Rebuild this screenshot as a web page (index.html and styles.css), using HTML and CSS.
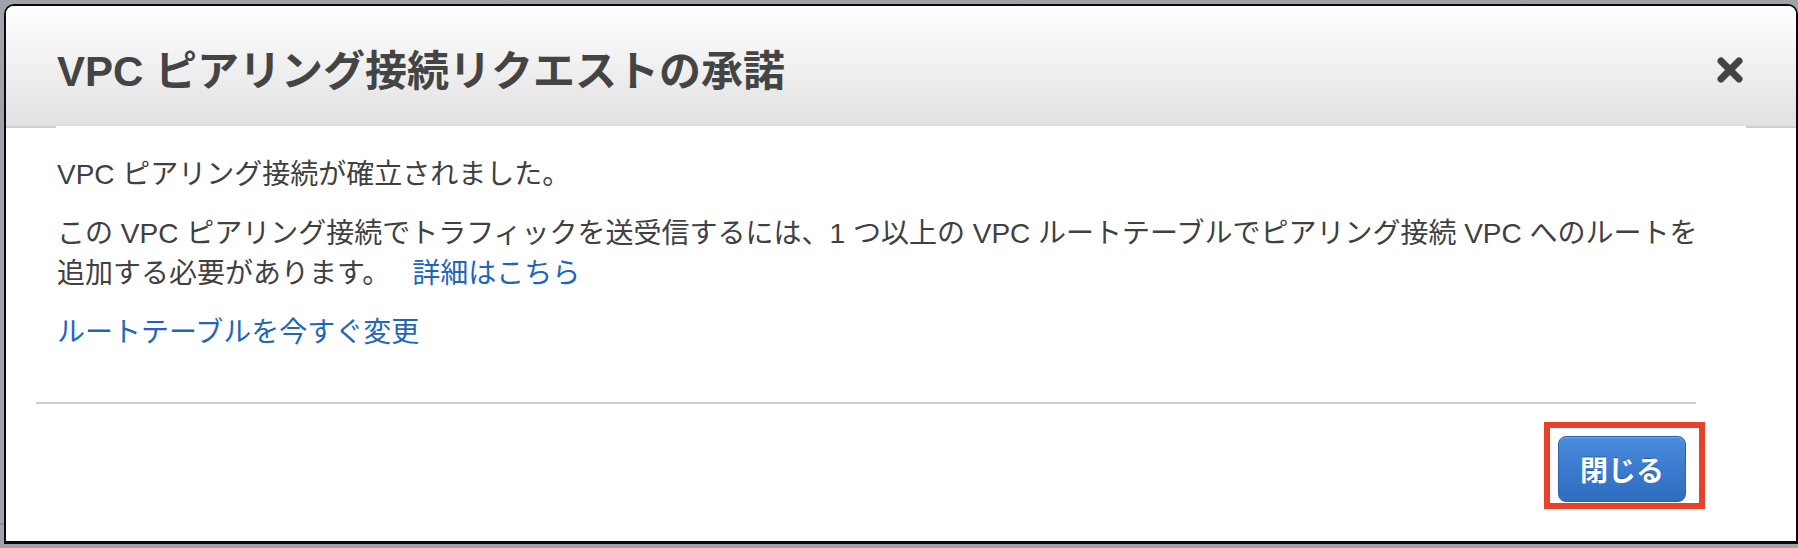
FILE: index.html
```html
<!DOCTYPE html>
<html lang="ja">
<head>
<meta charset="utf-8">
<title>VPC ピアリング接続リクエストの承諾</title>
<link rel="stylesheet" href="styles.css">
</head>
<body>
<div class="modal">
  <div class="modal-header">
    <h1 class="modal-title">VPC ピアリング接続リクエストの承諾</h1>
    <button class="close-btn" aria-label="閉じる">
      <svg width="26" height="26" viewBox="0 0 26 26"><path d="M4 4 L22 22 M22 4 L4 22" stroke="#444" stroke-width="7" stroke-linecap="round"/></svg>
    </button>
  </div>
  <div class="header-rule"></div>
  <div class="modal-body">
    <p>VPC ピアリング接続が確立されました。</p>
    <p>この VPC ピアリング接続でトラフィックを送受信するには、1 つ以上の VPC ルートテーブルでピアリング接続 VPC へのルートを追加する必要があります。<a class="link more" href="#">詳細はこちら</a></p>
    <p><a class="link" href="#">ルートテーブルを今すぐ変更</a></p>
  </div>
  <div class="separator"></div>
  <div class="modal-footer">
    <div class="highlight">
      <button class="primary-btn">閉じる</button>
    </div>
  </div>
</div>
</body>
</html>
```

FILE: styles.css
```css
html, body {
  margin: 0;
  padding: 0;
}
body {
  width: 1798px;
  height: 548px;
  overflow: hidden;
  background: linear-gradient(to bottom, #a0a4aa 0 523px, #8d9197 523px 525px, #a0a4aa 525px);
  font-family: "Liberation Sans", "Noto Sans CJK JP", sans-serif;
}
.modal {
  margin: 4px 0 0 4px;
  width: 1790px;
  height: 535px;
  border: 2px solid #0a0a0a;
  border-bottom-width: 3px;
  border-radius: 10px 10px 0 0;
  background: #fff;
  display: flex;
  flex-direction: column;
  overflow: hidden;
}
.modal-header {
  height: 120px;
  box-sizing: border-box;
  padding: 12px 53px 0 51px;
  display: flex;
  align-items: center;
  justify-content: space-between;
  background: linear-gradient(to bottom, #ffffff 0%, #f3f3f3 40%, #e1e1e1 100%);
}
.modal-title {
  margin: 0;
  font-size: 42px;
  line-height: 50px;
  font-weight: bold;
  color: #444;
  letter-spacing: 0;
}
.close-btn {
  border: 0;
  background: none;
  padding: 0;
  width: 26px;
  height: 26px;
  display: flex;
  margin-top: -4px;
}
.header-rule {
  height: 2px;
  background: linear-gradient(to right, #cfcfcf 0 50px, #fff 50px calc(100% - 50px), #cfcfcf calc(100% - 50px));
}
.modal-body {
  padding: 27px 0 0 51px;
  width: 1662px;
  color: #404040;
  font-size: 28px;
  line-height: 40px;
}
.modal-body p {
  margin: 0 0 19px;
}
.link {
  color: #1f66bb;
  text-decoration: none;
}
.more {
  margin-left: 22px;
}
.separator {
  margin: 30px 0 0 30px;
  width: 1660px;
  height: 2px;
  background: #cccccc;
}
.modal-footer {
  display: flex;
  justify-content: flex-end;
  padding: 18px 91px 0 0;
}
.highlight {
  border: 6px solid #e8412a;
  padding: 8px 13px 1px 8px;
  display: flex;
}
.primary-btn {
  width: 128px;
  height: 66px;
  border: 1px solid #2a62ad;
  border-radius: 8px;
  background: linear-gradient(to bottom, #4b8ddb 0%, #3a7bcf 50%, #2f6dc0 100%);
  box-shadow: inset 0 1px 0 rgba(255,255,255,0.25);
  color: #fff;
  font-family: "Liberation Sans", "Noto Sans CJK JP", sans-serif;
  font-size: 28px;
  font-weight: bold;
  text-shadow: 0 -1px 0 rgba(0,0,0,0.35);
  padding: 0;
}
```
